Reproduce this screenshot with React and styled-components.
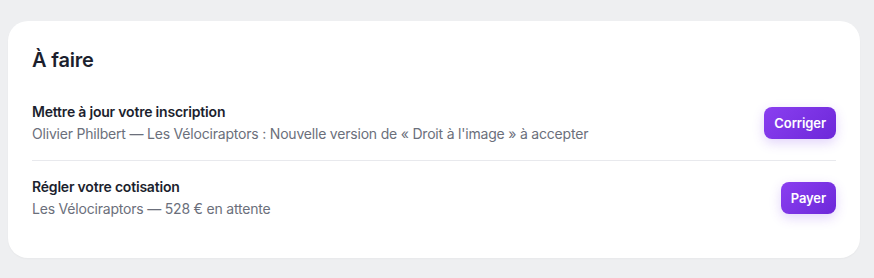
import styled, { createGlobalStyle } from 'styled-components'

const Global = createGlobalStyle`
    html, body {
        margin: 0;
        background: #eeeff1;
        font-family: Inter, "Noto Sans", sans-serif;
    }
`

const Page = styled.div`
    padding: 21px 14px 20px 8px;
`

const Card = styled.section`
    background: #ffffff;
    border-radius: 20px;
    padding: 25px 24px 39px;
    box-shadow: 0 1px 2px rgba(16, 24, 40, 0.03);
`

const Title = styled.h2`
    margin: 0 0 28px;
    font-size: 20px;
    font-weight: 600;
    color: #1c1f2e;
    letter-spacing: -0.2px;
    line-height: 28px;
`

const Row = styled.div`
    display: flex;
    align-items: center;
    justify-content: space-between;
    padding: ${p => (p.first ? '0 0 16px' : '16px 0 0')};
    border-bottom: ${p => (p.first ? '1px solid #e8e9ed' : 'none')};
`

const Text = styled.div`
    display: flex;
    flex-direction: column;
    gap: 2px;
`

const ItemTitle = styled.div`
    font-size: 14px;
    font-weight: 600;
    color: #1c1f2e;
    line-height: 20px;
    letter-spacing: -0.2px;
`

const ItemSub = styled.div`
    font-size: 14px;
    color: #6b6f7b;
    line-height: 20px;
    letter-spacing: -0.2px;
`

const Button = styled.button`
    border: none;
    border-radius: 8px;
    padding: 0 10px;
    height: 32px;
    font-family: inherit;
    font-size: 13px;
    font-weight: 600;
    letter-spacing: -0.1px;
    color: #ffffff;
    background: linear-gradient(135deg, #8a3ff0 0%, #6d28d9 100%);
    box-shadow: 0 4px 12px rgba(124, 58, 237, 0.22);
    cursor: pointer;
`

const tasks = [
    {
        title: 'Mettre à jour votre inscription',
        sub: 'Olivier Philbert — Les Vélociraptors : Nouvelle version de « Droit à l\'image » à accepter',
        action: 'Corriger',
    },
    {
        title: 'Régler votre cotisation',
        sub: 'Les Vélociraptors — 528 € en attente',
        action: 'Payer',
    },
]

export default function App () {
    return (
        <Page>
            <Global />
            <Card>
                <Title>À faire</Title>
                {tasks.map((t, i) => (
                    <Row key={t.title} first={i === 0}>
                        <Text>
                            <ItemTitle>{t.title}</ItemTitle>
                            <ItemSub>{t.sub}</ItemSub>
                        </Text>
                        <Button>{t.action}</Button>
                    </Row>
                ))}
            </Card>
        </Page>
    )
}
